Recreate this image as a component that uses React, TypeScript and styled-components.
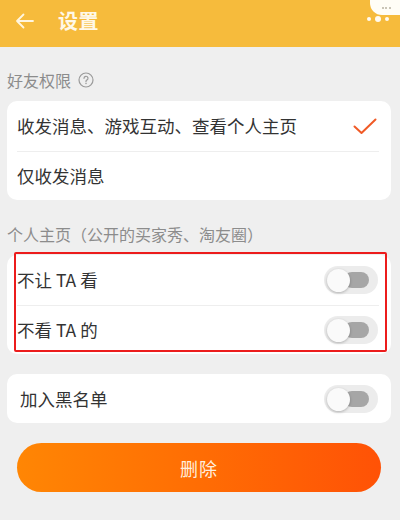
import React from "react";
import styled, { createGlobalStyle } from "styled-components";

const Global = createGlobalStyle`
  html, body { margin: 0; padding: 0; }
  body {
    width: 400px;
    height: 520px;
    overflow: hidden;
    background: #efefef;
    font-family: "Noto Sans CJK SC", "Noto Sans", sans-serif;
  }
`;

const Page = styled.div`
  width: 400px;
  height: 520px;
  display: flex;
  flex-direction: column;
  background: #efefef;
`;

const Header = styled.div`
  position: relative;
  height: 47px;
  flex: none;
  background: #f6bb3c;
  display: flex;
  align-items: center;
  padding-left: 15px;
  gap: 24px;
`;

const Title = styled.div`
  color: #fff8e8;
  font-size: 20px;
  font-weight: 700;
  letter-spacing: 0.5px;
  line-height: 1;
  margin-top: -6px;
`;

const BackIcon = styled.svg`
  width: 19px;
  height: 16px;
  margin-top: -6px;
`;

const Bubble = styled.div`
  position: absolute;
  right: 0;
  top: 0;
  width: 28px;
  height: 15px;
  background: #fffdf6;
  border-bottom-left-radius: 12px;
  display: flex;
  align-items: center;
  justify-content: center;
  gap: 1.5px;
  padding-left: 2px;
`;

const BubbleDot = styled.span`
  width: 2px;
  height: 2px;
  border-radius: 50%;
  background: #b9b2a2;
`;

const Dots = styled.div`
  position: absolute;
  right: 11px;
  top: 16px;
  display: flex;
  align-items: center;
  gap: 4px;
`;

const Dot = styled.span<{ $big?: boolean }>`
  width: ${(p) => (p.$big ? 6 : 4)}px;
  height: ${(p) => (p.$big ? 6 : 4)}px;
  border-radius: 50%;
  background: #fffaf0;
`;

const Body = styled.div`
  display: flex;
  flex-direction: column;
  padding: 0 9px 0 7px;
`;

const SectionLabel = styled.div<{ $top: number }>`
  display: flex;
  align-items: center;
  gap: 7px;
  margin-top: ${(p) => p.$top}px;
  height: 22px;
  color: #8c8c8c;
  font-size: 16px;
  line-height: 22px;
`;

const HelpIcon = styled.svg`
  width: 16px;
  height: 16px;
`;

const Card = styled.div<{ $top: number }>`
  position: relative;
  margin-top: ${(p) => p.$top}px;
  background: #fff;
  border-radius: 10px;
  padding: 0 12px 0 10px;
  display: flex;
  flex-direction: column;
`;

const Row = styled.div<{ $h: number; $divider?: boolean }>`
  height: ${(p) => p.$h}px;
  display: flex;
  align-items: center;
  justify-content: space-between;
  border-bottom: ${(p) => (p.$divider ? "1px solid #eeeeee" : "none")};
  color: #333;
  font-size: 17.5px;
  line-height: 1;
`;

const Check = styled.svg`
  width: 24px;
  height: 17px;
  margin-right: 2px;
`;

const Highlight = styled.div`
  position: absolute;
  left: 7px;
  right: 4px;
  top: -3px;
  bottom: 2px;
  border: 2.5px solid #ec1c1c;
  border-radius: 2px;
  pointer-events: none;
`;

const Toggle = styled.div`
  position: relative;
  width: 54px;
  height: 28px;
  border-radius: 14px;
  background: #ececec;
  margin-right: 1px;
`;

const ToggleTrack = styled.span`
  position: absolute;
  left: 20px;
  right: 9px;
  top: 6px;
  height: 16px;
  border-radius: 8px;
  background: #a6a6a6;
`;

const ToggleKnob = styled.span`
  position: absolute;
  left: 3px;
  top: 3px;
  width: 23px;
  height: 23px;
  border-radius: 50%;
  background: #fafafa;
  box-shadow: 0 1px 3px rgba(0, 0, 0, 0.25);
`;

const DeleteButton = styled.button`
  margin: 20px 10px 0 10px;
  height: 49px;
  border: none;
  border-radius: 25px;
  background: linear-gradient(90deg, #ff8604 0%, #ff6d04 50%, #ff5206 100%);
  color: #ffeede;
  font-family: inherit;
  font-size: 18px;
  letter-spacing: 1px;
  display: flex;
  align-items: center;
  justify-content: center;
`;

const Switch = () => (
  <Toggle>
    <ToggleTrack />
    <ToggleKnob />
  </Toggle>
);

export default function App() {
  return (
    <Page>
      <Global />
      <Header>
        <BackIcon viewBox="0 0 19 16" fill="none">
          <path
            d="M18 8H2M8.5 1.5L2 8l6.5 6.5"
            stroke="#fff6e0"
            strokeWidth="1.8"
            strokeLinecap="round"
            strokeLinejoin="round"
          />
        </BackIcon>
        <Title>设置</Title>
        <Bubble>
          <BubbleDot />
          <BubbleDot />
          <BubbleDot />
        </Bubble>
        <Dots>
          <Dot />
          <Dot $big />
          <Dot />
        </Dots>
      </Header>
      <Body>
        <SectionLabel $top={22}>
          好友权限
          <HelpIcon viewBox="0 0 16 16" fill="none">
            <circle cx="8" cy="8" r="7" stroke="#9a9a9a" strokeWidth="1.2" />
            <path
              d="M6 6.3a2 2 0 1 1 2.8 1.8c-.5.3-.8.6-.8 1.2v.4"
              stroke="#9a9a9a"
              strokeWidth="1.2"
              strokeLinecap="round"
            />
            <circle cx="8" cy="11.6" r="0.75" fill="#9a9a9a" />
          </HelpIcon>
        </SectionLabel>
        <Card $top={10}>
          <Row $h={50} $divider>
            收发消息、游戏互动、查看个人主页
            <Check viewBox="0 0 24 17" fill="none">
              <path
                d="M1.5 8.5l7 6.5L22.5 1.5"
                stroke="#f05a26"
                strokeWidth="2"
                strokeLinecap="round"
                strokeLinejoin="round"
              />
            </Check>
          </Row>
          <Row $h={48}>仅收发消息</Row>
        </Card>
        <SectionLabel $top={23}>个人主页（公开的买家秀、淘友圈）</SectionLabel>
        <Card $top={10}>
          <Row $h={50} $divider>
            不让 TA 看
            <Switch />
          </Row>
          <Row $h={48}>
            不看 TA 的
            <Switch />
          </Row>
          <Highlight />
        </Card>
        <Card $top={20}>
          <Row $h={49}>
            <span style={{ marginLeft: 3 }}>加入黑名单</span>
            <Switch />
          </Row>
        </Card>
        <DeleteButton>删除</DeleteButton>
      </Body>
    </Page>
  );
}
